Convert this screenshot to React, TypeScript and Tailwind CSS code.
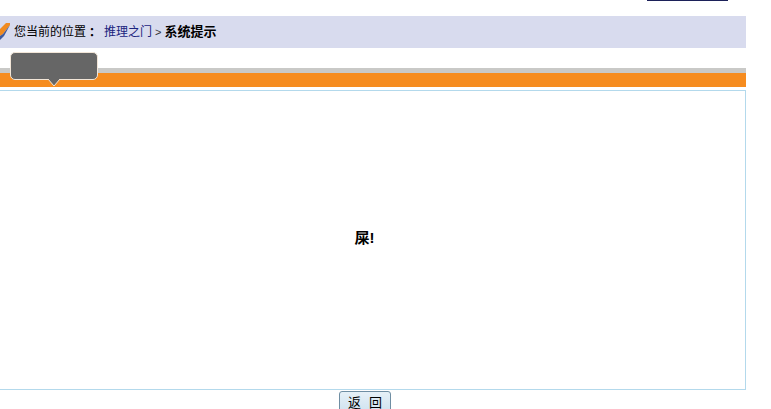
export default function App() {
  return (
    <div className="h-[409px] w-[771px] overflow-hidden bg-white font-['Liberation_Sans','Noto_Sans_CJK_SC',sans-serif] text-xs text-black">
      <div className="flex h-4 w-[746px] items-start justify-end pr-[18px]">
        <div className="h-px w-[81px] bg-[#1c2159]" />
      </div>

      <div className="flex h-8 w-[746px] items-center bg-[#d8dbee]">
        <svg width="10" height="18" viewBox="0 0 10 18" className="mr-1 shrink-0">
          <path d="M0 6 L6 0 L10 0 L10 2 L3 11 L0 13 Z" fill="#f08a20" />
          <path d="M0 13 L3 11 L10 2 L4 13 L0 17 Z" fill="#3f5a9c" />
        </svg>
        <span>您当前的位置</span>
        <span className="font-['Noto_Sans_CJK_TC'] font-bold">：</span>
        <a className="ml-1.5 text-[#1a237e]">推理之门</a>
        <span className="mx-[3px] text-[11px] text-[#333]">&gt;</span>
        <b className="text-[13px]">系统提示</b>
      </div>

      <div className="relative mt-5 w-[746px]">
        <div className="h-[5px] bg-[#c9c9c7]" />
        <div className="h-[14px] bg-[#f68c1f]" />
        <div className="absolute left-[10px] top-[-16px] h-[28px] w-[88px] rounded-[5px] border border-[#f2e6d8] bg-[#666666]" />
        <svg width="12" height="8" viewBox="0 0 12 8" className="absolute left-[48px] top-[11px]">
          <path d="M0 0 L6 7 L12 0 Z" fill="#666666" />
          <path d="M0 0 L6 7 L12 0" fill="none" stroke="#f2e6d8" />
        </svg>
      </div>

      <div className="mt-[3px] flex h-[300px] w-[746px] items-center justify-center border border-l-0 border-[#b3d9ec] pr-4 pb-1">
        <b className="text-[15px]">屎!</b>
      </div>

      <div className="flex w-[746px] justify-center pt-px pr-[16px]">
        <button className="flex h-8 w-[52px] items-start justify-center gap-2 rounded-[3px] border border-[#6f8ea3] bg-gradient-to-b from-[#e6f0f7] to-[#c4dcec] pt-[2px] text-[13px] text-black">
          <span>返</span>
          <span>回</span>
        </button>
      </div>
    </div>
  );
}
